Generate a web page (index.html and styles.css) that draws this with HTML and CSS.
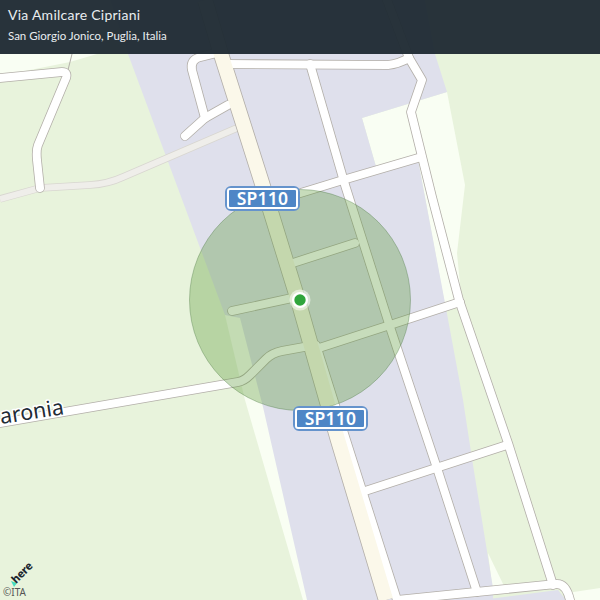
FILE: index.html
```html
<!DOCTYPE html>
<html lang="it">
<head>
    <meta charset="UTF-8">
    <meta name="viewport" content="width=device-width, initial-scale=1.0">
    <title>Via Amilcare Cipriani</title>
    <link rel="stylesheet" href="styles.css">
</head>
<body>
    <div class="map">
        <svg class="map-svg" width="600" height="600" viewBox="0 0 600 600">
            <defs>
                <g id="streets">
                    <path d="M0,78 L62,72 Q68,72 66,78 L38,145 Q36,150 37,160 L40,188"/>
                    <path d="M228,105 L205,118 L185,136"/>
                    <path d="M205,118 L192,70 Q190,60 200,57 L216,53"/>
                    <path d="M228,64 L388,65 Q398,64 409,58 L422,80 L411,112 L432,197 L459,300 L508,443 L553,585"/>
                    <path d="M387,0 L409,58"/>
                    <path d="M310,64 L345,185 L390,327 L437,468 L477,592"/>
                    <path d="M268,203 L343,180 L418,158"/>
                    <path d="M293,263 L355,243"/>
                    <path d="M232,311 L292,298"/>
                    <path d="M316,349 L390,325 L460,302"/>
                    <path d="M0,423 L238,382 Q244,381 250,375 L266,359 Q272,353 282,351 L304,347"/>
                    <path d="M316,345 L346,440 L397,600"/>
                    <path d="M362,492 L507,445"/>
                    <path d="M397,600 L556,584 Q566,583 570,600"/>
                </g>
            </defs>

            <!-- land -->
            <rect class="land" width="600" height="600"/>
            <polygon class="pale" points="0,0 140,0 97,54 70,62 0,76"/>
            <polygon class="pale" points="362,118 447,92 465,185 457,253 462,305 445,305 418,160 377,170"/>
            <polygon class="pale" points="225,315 240,315 315,600 303,600 245,400"/>
            <polygon class="pale" points="488,553 505,588 493,592"/>
            <polygon class="pale" points="567,593 600,588 600,600 567,600"/>
            <polygon class="built" points="128,54 225,315 240,318 263,407 307,600 493,600 493,588 473,465 463,400 445,303 418,160 377,170 362,118 447,92 435,54 425,0 110,0"/>
            <polygon class="built" points="480,600 558,590 566,600"/>

            <!-- small road, drawn under the others -->
            <path class="lane-casing" d="M0,199 L40,188 L90,185 Q108,184 123,177 L237,128"/>
            <path class="lane-fill" d="M0,199 L40,188 L90,185 Q108,184 123,177 L237,128"/>
            <path class="path-line" d="M68,70 L72,54"/>

            <!-- streets -->
            <use href="#streets" class="street-casing"/>
            <path class="main-casing" d="M205,0 L221,54 L261,180 L298,300 L338,440 L386,600"/>
            <use href="#streets" class="street-fill"/>
            <path class="main-fill" d="M205,0 L221,54 L261,180 L298,300 L338,440 L386,600"/>

            <!-- labels on the ground -->
            <text class="road-name" transform="translate(1 424) rotate(-8.8)">aronia</text>
            <polygon class="here-mark" points="11,581 17,583 14,587"/>
            <text class="here-logo" transform="translate(16 584) rotate(-45)">here</text>
            <text class="copyright" x="3" y="596">©ITA</text>

            <!-- accuracy circle and position -->
            <circle class="accuracy" cx="300" cy="300" r="110.5"/>
            <circle class="dot-halo" cx="300" cy="300" r="10.5"/>
            <circle class="dot-ring" cx="300" cy="300" r="8"/>
            <circle class="dot" cx="300" cy="300" r="5.7"/>
        </svg>

        <div class="shield shield-top"><span class="shield-inner">SP110</span></div>
        <div class="shield shield-bottom"><span class="shield-inner">SP110</span></div>

        <div class="place-header">
            <div class="place-title">Via Amilcare Cipriani</div>
            <div class="place-sub">San Giorgio Jonico, Puglia, Italia</div>
        </div>
    </div>
</body>
</html>
```

FILE: styles.css
```css
body { margin: 0; font-family: "Noto Sans", Arial, sans-serif; }
.map { position: relative; width: 600px; height: 600px; overflow: hidden; }
.map-svg { display: block; }

.land { fill: #e8f3dc; }
.pale { fill: #f9fef3; }
.built { fill: #dfe0ec; }

.street-casing { fill: none; stroke: #b3afa9; stroke-width: 9.6; stroke-linejoin: round; stroke-linecap: round; }
.street-fill { fill: none; stroke: #fff; stroke-width: 8; stroke-linejoin: round; stroke-linecap: round; }
.main-casing { fill: none; stroke: #b3afa9; stroke-width: 16; }
.main-fill { fill: none; stroke: #fbf8ea; stroke-width: 14.4; }
.lane-casing { fill: none; stroke: #d8d6d0; stroke-width: 7.5; stroke-linejoin: round; }
.lane-fill { fill: none; stroke: #efeeea; stroke-width: 6; stroke-linejoin: round; }
.path-line { fill: none; stroke: #b3afa9; stroke-width: 1; }

.road-name { font-size: 21.5px; fill: #222b36; stroke: #fff; stroke-width: 3px; paint-order: stroke; stroke-linejoin: round; }
.here-logo { font-size: 11px; font-weight: 800; fill: #1c2730; letter-spacing: -0.2px; }
.here-mark { fill: #48dcc0; }
.copyright { font-size: 10px; fill: #555; }

.accuracy { fill: rgba(85, 150, 50, 0.33); stroke: rgba(70, 115, 60, 0.35); stroke-width: 1; }
.dot-halo { fill: rgba(255, 255, 255, 0.5); }
.dot-ring { fill: #fff; }
.dot { fill: #2fa53c; }

.shield { position: absolute; box-sizing: border-box; width: 75px; height: 25px; padding: 0; background: #4e86c6; border: 2px solid #6593cc; border-radius: 6px; }
.shield-top { left: 225px; top: 186px; }
.shield-bottom { left: 293px; top: 406px; }
.shield-inner { display: block; box-sizing: border-box; height: 21px; border: 2px solid #fff; border-radius: 3px; color: #fff; font-size: 17.5px; font-weight: 600; line-height: 17px; text-align: center; letter-spacing: 0.2px; }

.place-header { position: absolute; left: 0; top: 0; right: 0; height: 54px; box-sizing: border-box; padding: 6px 8px; background: rgba(33, 44, 53, 0.97); color: #e9edf0; }
.place-title { font-family: Lato, Arial, sans-serif; font-size: 14px; line-height: 18px; letter-spacing: 0.25px; }
.place-sub { font-family: Lato, Arial, sans-serif; font-size: 11.5px; line-height: 16px; margin-top: 4px; }
```
